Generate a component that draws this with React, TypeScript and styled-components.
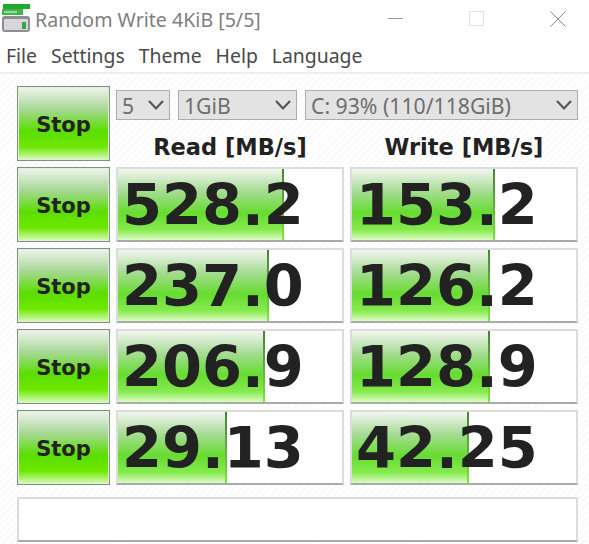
import React from 'react'
import styled, { createGlobalStyle } from 'styled-components'

const GlobalStyle = createGlobalStyle`
  html, body {
    margin: 0;
    padding: 0;
    background: #fff;
  }
`

const Window = styled.div`
  width: 589px;
  height: 544px;
  overflow: hidden;
  display: flex;
  flex-direction: column;
  background: #fff;
  color: #222;
  font-family: 'Noto Sans', 'Open Sans', sans-serif;
`

const TitleBar = styled.div`
  height: 38px;
  flex: none;
  display: flex;
  align-items: center;
  gap: 51px;
  padding: 0 16px 0 1px;
`

const TitleGroup = styled.div`
  flex: 1;
  display: flex;
  align-items: center;
  gap: 5px;
`

const AppTitle = styled.div`
  font-size: 19.6px;
  color: #808080;
  white-space: nowrap;
`

const WindowButton = styled.div`
  width: 30px;
  height: 38px;
  display: flex;
  align-items: center;
  justify-content: center;
`

const MenuBar = styled.div`
  height: 34px;
  flex: none;
  display: flex;
  align-items: center;
  gap: 14px;
  padding-left: 6px;
  font-size: 19.4px;
  color: #4a4a4a;
  border-bottom: 2px solid #eee;
`

const Content = styled.div`
  flex: 1;
  display: grid;
  grid-template-columns: 93px 228px 228px;
  grid-template-rows: repeat(5, 75px) 51px;
  column-gap: 6px;
  row-gap: 6px;
  padding: 12px 10px 0 17px;
  background: repeating-linear-gradient(135deg, #fff 0 3px, #fafafa 3px 5px);
`

const StopButton = styled.div`
  box-sizing: border-box;
  padding-top: 2px;
  border: 1px solid #7c927c;
  box-shadow: inset 0 0 0 1px #e4eee0;
  display: flex;
  align-items: center;
  justify-content: center;
  font-family: 'DejaVu Sans', sans-serif;
  font-weight: 700;
  font-size: 21px;
  color: #222;
  background: linear-gradient(180deg, #f0f4ee 0%, #a8d898 30%, #5ade00 60%, #6fe800 82%, #d8fcc0 100%);
`

const Controls = styled.div`
  grid-column: 2 / 4;
  display: flex;
  flex-direction: column;
`

const Selects = styled.div`
  display: flex;
  gap: 8px;
  margin-top: 4px;
`

const Select = styled.div<{ $width: number }>`
  width: ${(p) => p.$width}px;
  height: 30px;
  box-sizing: border-box;
  border: 1px solid #adadad;
  background: #e3e3e3;
  display: flex;
  align-items: center;
  justify-content: space-between;
  padding: 0 4px 0 5px;
  font-size: 21.2px;
  color: #6e6e6e;
  white-space: nowrap;
`

const Headers = styled.div`
  display: grid;
  grid-template-columns: 228px 228px;
  column-gap: 6px;
  margin-top: 15px;
`

const Header = styled.div`
  font-family: 'DejaVu Sans', sans-serif;
  font-weight: 700;
  font-size: 22.5px;
  line-height: 24px;
  text-align: center;
  color: #222;
`

const Meter = styled.div`
  position: relative;
  box-sizing: border-box;
  background: #fff;
  border: 2px solid;
  border-color: #dcdcdc #dcdcdc #aaa #dcdcdc;
  overflow: hidden;
`

const Fill = styled.div`
  position: absolute;
  left: 0;
  top: 0;
  bottom: 0;
  box-sizing: border-box;
  border-right: 2px solid;
  border-image: linear-gradient(180deg, #47803a 0%, #5fae3f 50%, #7fe83f 100%) 1;
  background: linear-gradient(180deg, #f2f6f0 0%, #a9dc98 30%, #66dc30 62%, #84ea4c 85%, #dcfcc4 100%);
`

const Value = styled.div`
  position: relative;
  font-family: 'DejaVu Sans', sans-serif;
  font-weight: 700;
  font-size: 57.5px;
  line-height: 73px;
  padding-left: 4px;
  color: #222;
`

const Comment = styled.div`
  grid-column: 1 / 4;
  margin-top: 6px;
  box-sizing: border-box;
  background: #fff;
  border: 2px solid;
  border-color: #dcdcdc #dcdcdc #aaa #dcdcdc;
`

const Chevron = () => (
  <svg width="18" height="12" viewBox="0 0 18 12">
    <path d="M2 2 L9 9.5 L16 2" fill="none" stroke="#555" strokeWidth="2.2" />
  </svg>
)

const AppIcon = () => (
  <svg width="29" height="29" viewBox="0 0 29 29" style={{ marginBottom: 2 }}>
    <rect x="2" y="0" width="27" height="5" fill="#22a82e" />
    <rect x="1" y="5" width="21" height="6" fill="#3fb54a" />
    <rect x="3" y="7" width="13" height="2" fill="#9ad89e" />
    <rect x="1" y="12" width="28" height="16" rx="3" fill="#8e8e8e" />
    <rect x="3" y="15" width="24" height="11" rx="1" fill="#d6d6dc" />
    <rect x="21" y="18" width="4" height="7" fill="#35a83f" />
  </svg>
)

const rows = [
  { read: '528.2', readPct: 74, write: '153.2', writePct: 63.8 },
  { read: '237.0', readPct: 67.2, write: '126.2', writePct: 61.8 },
  { read: '206.9', readPct: 65.6, write: '128.9', writePct: 61.8 },
  { read: '29.13', readPct: 48.5, write: '42.25', writePct: 52.2 },
]

export default function App() {
  return (
    <Window>
      <GlobalStyle />
      <TitleBar>
        <TitleGroup>
          <AppIcon />
          <AppTitle>Random Write 4KiB [5/5]</AppTitle>
        </TitleGroup>
        <WindowButton>
          <svg width="16" height="2" viewBox="0 0 16 2">
            <rect width="15" height="1" fill="#9a9a9a" />
          </svg>
        </WindowButton>
        <WindowButton>
          <svg width="16" height="16" viewBox="0 0 16 16">
            <rect x="0.5" y="0.5" width="14" height="14" fill="none" stroke="#e2e2e2" />
          </svg>
        </WindowButton>
        <WindowButton>
          <svg width="16" height="16" viewBox="0 0 16 16">
            <path d="M0.5 0.5 L15.5 15.5 M15.5 0.5 L0.5 15.5" stroke="#8a8a8a" fill="none" />
          </svg>
        </WindowButton>
      </TitleBar>
      <MenuBar>
        <span>File</span>
        <span>Settings</span>
        <span>Theme</span>
        <span>Help</span>
        <span>Language</span>
      </MenuBar>
      <Content>
        <StopButton>Stop</StopButton>
        <Controls>
          <Selects>
            <Select $width={54}>
              5
              <Chevron />
            </Select>
            <Select $width={119}>
              1GiB
              <Chevron />
            </Select>
            <Select $width={273}>
              C: 93% (110/118GiB)
              <Chevron />
            </Select>
          </Selects>
          <Headers>
            <Header>Read [MB/s]</Header>
            <Header>Write [MB/s]</Header>
          </Headers>
        </Controls>
        {rows.map((row) => (
          <React.Fragment key={row.read}>
            <StopButton>Stop</StopButton>
            <Meter>
              <Fill style={{ width: `${row.readPct}%` }} />
              <Value>{row.read}</Value>
            </Meter>
            <Meter>
              <Fill style={{ width: `${row.writePct}%` }} />
              <Value>{row.write}</Value>
            </Meter>
          </React.Fragment>
        ))}
        <Comment />
      </Content>
    </Window>
  )
}
